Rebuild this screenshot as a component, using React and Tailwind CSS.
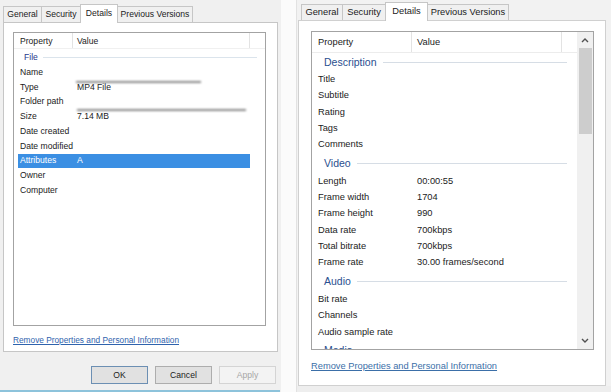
import React from 'react';

/* Left dialog: rows of the "File" group */
const leftRows = [
  { p: 'Name', v: '' },
  { p: 'Type', v: 'MP4 File' },
  { p: 'Folder path', v: '' },
  { p: 'Size', v: '7.14 MB' },
  { p: 'Date created', v: '' },
  { p: 'Date modified', v: '' },
  { p: 'Attributes', v: 'A', sel: true },
  { p: 'Owner', v: '' },
  { p: 'Computer', v: '' },
];

/* Right dialog: groups and their rows */
const rightGroups = [
  { title: 'Description', rows: [['Title', ''], ['Subtitle', ''], ['Rating', ''], ['Tags', ''], ['Comments', '']] },
  {
    title: 'Video',
    rows: [
      ['Length', '00:00:55'],
      ['Frame width', '1704'],
      ['Frame height', '990'],
      ['Data rate', '700kbps'],
      ['Total bitrate', '700kbps'],
      ['Frame rate', '30.00 frames/second'],
    ],
  },
  { title: 'Audio', rows: [['Bit rate', ''], ['Channels', ''], ['Audio sample rate', '']] },
  { title: 'Media', rows: [] },
];

function Tab({ label, selected, w }) {
  return (
    <div
      className={
        selected
          ? 'relative z-10 -mb-px -ml-px flex h-[19px] items-start justify-center border border-b-0 border-[#c6c6c6] bg-white pt-[2px]'
          : '-ml-px flex h-[16px] items-center justify-center border border-b-0 border-[#c6c6c6] bg-[#f0f0f0]'
      }
      style={{ width: w }}
    >
      {label}
    </div>
  );
}

function LeftDialog() {
  return (
    <div className="flex h-full w-[281px] flex-col bg-[#f0f0f0] text-[8.6px] text-[#1b1b1b]" style={{ fontFamily: '"Liberation Sans", Arial, sans-serif' }}>
      <div className="flex h-[22px] items-end pl-[4px]">
        <Tab label="General" w={39} />
        <Tab label="Security" w={40} />
        <Tab label="Details" selected w={38} />
        <Tab label="Previous Versions" w={76} />
      </div>
      <div className="ml-[3px] flex h-[330px] w-[275px] flex-col border border-[#c6c6c6] bg-white pl-[9px] pt-[9px]">
        <div className="relative h-[294px] w-[253px] overflow-hidden border border-[#a3a3a3]">
          <div className="flex h-[16px] items-center border-b border-[#f0f0f0]">
            <div className="h-full w-[59px] border-r border-[#e3e3e3] pl-[6px] leading-[16px]">Property</div>
            <div className="h-full w-[177px] border-r border-[#e3e3e3] pl-[4px] leading-[16px]">Value</div>
          </div>
          <div className="flex h-[16px] items-center pl-[10px] pr-[8px] text-[#1e3a8a]">
            <span>File</span>
            <div className="ml-[5px] h-px flex-1 bg-[#dbe4ec]" />
          </div>
          {leftRows.map((r) => (
            <div
              key={r.p}
              className={
                r.sel
                  ? 'ml-[4px] flex h-[14.75px] w-[232px] items-center bg-[#3b8fe3] text-white'
                  : 'ml-[4px] flex h-[14.75px] w-[232px] items-center'
              }
            >
              <span className="w-[59px] pl-[2px]">{r.p}</span>
              <span>{r.v}</span>
            </div>
          ))}
          {/* blurred redactions */}
          <div className="absolute left-[62px] top-[48px] h-[2px] w-[125px] bg-[#8a8a8a] blur-[0.8px]" />
          <div className="absolute left-[63px] top-[76px] h-[2px] w-[169px] bg-[#8a8a8a] blur-[0.8px]" />
        </div>
        <div className="mt-[8px] h-[14px]">
          <span className="text-[8.3px] text-[#2f63ad] underline">Remove Properties and Personal Information</span>
        </div>
      </div>
      <div className="mt-[14px] flex gap-[7px] pl-[91px]">
        <div className="flex h-[18px] w-[57px] items-center justify-center border border-[#6c8fb3] bg-[#e1e1e1]">OK</div>
        <div className="flex h-[18px] w-[57px] items-center justify-center border border-[#adadad] bg-[#e1e1e1]">Cancel</div>
        <div className="flex h-[18px] w-[57px] items-center justify-center border border-[#d4d4d4] bg-[#f3f3f3] text-[#a6a6a6]">Apply</div>
      </div>
      <div className="mt-auto h-[2px] w-[280px] bg-[#8dc3db]" />
    </div>
  );
}

function Chevron({ up }) {
  return (
    <svg width="8" height="6" viewBox="0 0 8 6">
      <path d={up ? 'M1 5 L4 2 L7 5' : 'M1 1 L4 4 L7 1'} fill="none" stroke="#505050" strokeWidth="1.4" />
    </svg>
  );
}

function RightDialog() {
  return (
    <div className="flex h-full flex-1 flex-col border-l border-[#e2e2e2] bg-[#f2f2f2] text-[9.3px] text-[#1b1b1b]" style={{ fontFamily: '"Liberation Sans", Arial, sans-serif' }}>
      <div className="flex h-[20px] items-end pl-[5px]">
        <Tab label="General" w={42} />
        <Tab label="Security" w={44} />
        <Tab label="Details" selected w={43} />
        <Tab label="Previous Versions" w={82} />
      </div>
      <div className="ml-[1px] flex h-[366px] w-[308px] flex-col border border-[#d0d0d0] bg-white pl-[12px] pt-[10px]">
        <div className="flex h-[319px] w-[283px] overflow-hidden border border-[#a3a3a3]">
          <div className="h-full flex-1 overflow-hidden">
            <div className="flex h-[21px] items-stretch border-b border-[#ececec]">
              <div className="w-[100px] border-r border-[#e3e3e3] pl-[6px] leading-[21px]">Property</div>
              <div className="w-[150px] border-r border-[#e3e3e3] pl-[5px] leading-[21px]">Value</div>
            </div>
            {rightGroups.map((g, i) => (
              <div key={g.title}>
                <div className={i === 0 ? 'flex h-[19px] items-center pl-[12px] pr-[10px]' : 'flex h-[21px] items-center pl-[12px] pr-[10px]'}>
                  <span className="text-[10.5px] text-[#2a4f8f]">{g.title}</span>
                  <div className="ml-[6px] h-px flex-1 bg-[#d6dde5]" />
                </div>
                {g.rows.map(([p, v]) => (
                  <div key={p} className="flex h-[16.2px] items-center pl-[6px]">
                    <span className="w-[99px]">{p}</span>
                    <span>{v}</span>
                  </div>
                ))}
              </div>
            ))}
          </div>
          <div className="flex w-[16px] flex-col bg-[#f0f0f0]">
            <div className="flex h-[16px] items-center justify-center">
              <Chevron up />
            </div>
            <div className="mx-auto h-[86px] w-[13px] bg-[#cdcdcd]" />
            <div className="flex-1" />
            <div className="flex h-[16px] items-center justify-center">
              <Chevron />
            </div>
          </div>
        </div>
        <div className="mt-[10px] h-[14px]">
          <span className="text-[#3b6fa8] underline">Remove Properties and Personal Information</span>
        </div>
      </div>
      <div className="flex-1 bg-[#eeeeee]" />
    </div>
  );
}

export default function App() {
  return (
    <div className="flex h-[392px] w-[611px] overflow-hidden bg-white">
      <LeftDialog />
      <div className="w-[15px] bg-[#fbfbfb]" />
      <RightDialog />
    </div>
  );
}
